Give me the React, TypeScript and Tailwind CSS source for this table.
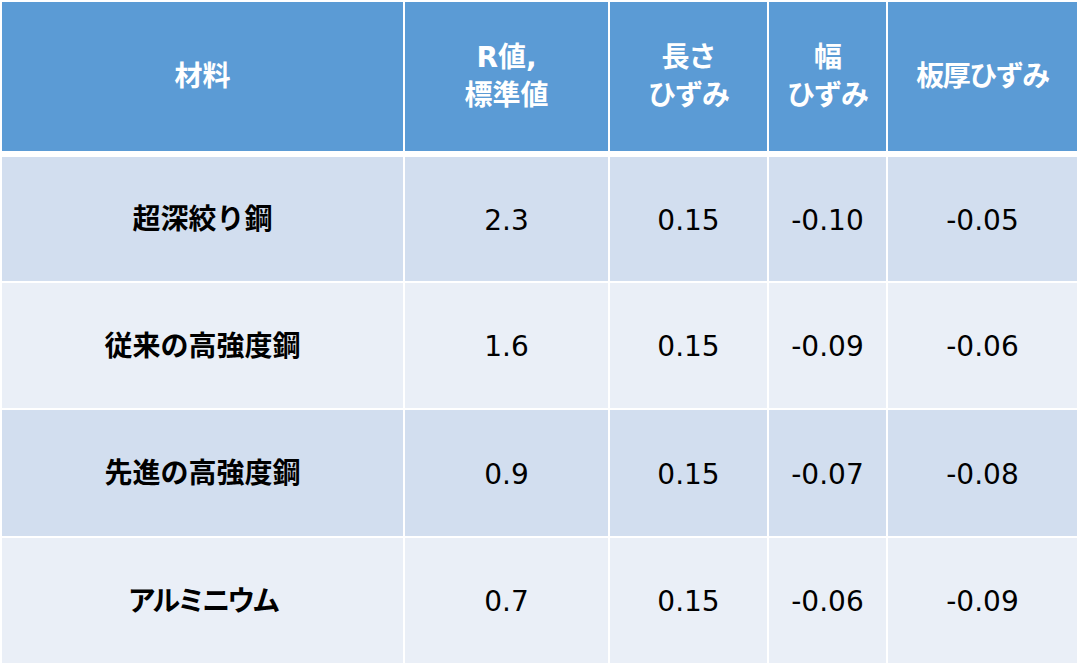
import React from 'react';

const cols = 'grid grid-cols-[401px_203px_157px_117px_189px] gap-x-[2px]';

const rows = [
  { name: '超深絞り鋼', r: '2.3', len: '0.15', wid: '-0.10', thick: '-0.05', h: 'h-[124px]', bg: 'bg-[#d2deef]', track: '' },
  { name: '従来の高強度鋼', r: '1.6', len: '0.15', wid: '-0.09', thick: '-0.06', h: 'h-[125px]', bg: 'bg-[#eaeff7]', track: '' },
  { name: '先進の高強度鋼', r: '0.9', len: '0.15', wid: '-0.07', thick: '-0.08', h: 'h-[126px]', bg: 'bg-[#d2deef]', track: '' },
  { name: 'アルミニウム', r: '0.7', len: '0.15', wid: '-0.06', thick: '-0.09', h: 'h-[125px]', bg: 'bg-[#eaeff7]', track: 'tracking-[-3px]' },
];

function HeadCell({ children, className = '' }: { children: React.ReactNode; className?: string }) {
  return (
    <div className={`flex items-center justify-center bg-[#5b9bd5] text-center text-[28px] leading-[38px] font-bold text-white ${className}`}>
      <div>{children}</div>
    </div>
  );
}

export default function App() {
  return (
    <div className="w-[1083px] h-[668px] bg-white p-[2px] font-['DejaVu_Sans','Noto_Sans_CJK_JP',sans-serif]">
      <div className="flex flex-col gap-y-[2px]">
        {/* header */}
        <div className={`${cols} h-[149px] mb-[4px]`}>
          <HeadCell>材料</HeadCell>
          <HeadCell>
            R値,
            <br />
            標準値
          </HeadCell>
          <HeadCell className="tracking-[-1px]">
            長さ
            <br />
            ひずみ
          </HeadCell>
          <HeadCell className="tracking-[-1px]">
            幅
            <br />
            ひずみ
          </HeadCell>
          <HeadCell className="tracking-[-1.5px]">板厚ひずみ</HeadCell>
        </div>

        {rows.map((row) => (
          <div key={row.name} className={`${cols} ${row.h}`}>
            <div className={`flex items-center justify-center pt-[2px] ${row.bg} text-[28px] font-bold text-black ${row.track}`}>
              {row.name}
            </div>
            {[row.r, row.len, row.wid, row.thick].map((v, i) => (
              <div key={i} className={`flex items-center justify-center pt-[3px] ${row.bg} text-[28px] text-black`}>
                {v}
              </div>
            ))}
          </div>
        ))}
      </div>
    </div>
  );
}
